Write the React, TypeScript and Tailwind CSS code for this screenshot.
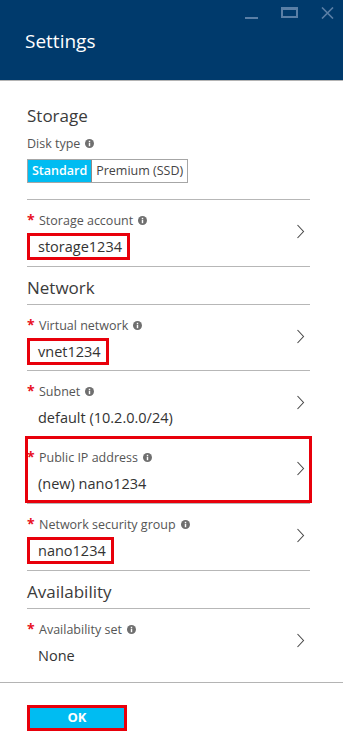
import React from 'react';

type Field = {
  label: string;
  value: string;
  boxValue?: boolean;
  boxRow?: boolean;
};

const InfoIcon: React.FC = () => (
  <svg width="9" height="9" viewBox="0 0 10 10" className="inline-block ml-[5px] mb-[1px]">
    <circle cx="5" cy="5" r="5" fill="#6f6f6f" />
    <rect x="4.2" y="4.2" width="1.6" height="3.8" fill="#fff" />
    <rect x="4.2" y="2" width="1.6" height="1.5" fill="#fff" />
  </svg>
);

const Chevron: React.FC = () => (
  <svg width="9" height="15" viewBox="0 0 9 15" className="shrink-0">
    <path d="M1.5 1 L7.5 7.5 L1.5 14" fill="none" stroke="#4a4a4a" strokeWidth="1.1" />
  </svg>
);

const SectionTitle: React.FC<{ children: React.ReactNode }> = ({ children }) => (
  <div className="h-[38px] flex items-end pb-[4px] text-[17px] leading-[24px] text-[#3b3b3b] border-b border-[#b7b7b7]">
    {children}
  </div>
);

const FieldRow: React.FC<{ field: Field; height: string; last?: boolean }> = ({ field, height, last }) => (
  <div className={`relative ${height} flex justify-between ${last ? '' : 'border-b border-[#b7b7b7]'}`}>
    <div className="flex flex-col pt-[1px]">
      <div className="mt-[11px] h-[18px] flex items-center text-[12.5px] text-[#555]">
        <span className="text-[#e81123] text-[14px] font-bold w-[12px] leading-none -mt-[3px]">*</span>
        <span>{field.label}</span>
        <InfoIcon />
      </div>
      <div
        className={`mt-[3px] h-[27px] flex items-center pl-[8px] pr-[5px] text-[14.5px] text-[#333] border-[3px] w-fit ${
          field.boxValue ? 'border-[#e8000b]' : 'border-transparent'
        }`}
      >
        {field.value}
      </div>
    </div>
    <div className="mr-[5px] mt-[24px]">
      <Chevron />
    </div>
    {field.boxRow && (
      <div className="absolute left-[-2px] right-[-2px] top-[-1px] bottom-[0px] border-[3px] border-[#e8000b]" />
    )}
  </div>
);

const App: React.FC = () => {
  return (
    <div className="w-[343px] h-[741px] bg-white flex flex-col font-['Open_Sans',sans-serif] overflow-hidden">
      {/* header */}
      <div className="h-[81px] shrink-0 bg-[#003a6c] border-b border-[#b4b4b4] flex flex-col">
        <div className="h-[28px] flex items-start justify-end gap-[23px] pr-[9px] pt-[7px]">
          <div className="w-[13px] h-[12px] flex items-end">
            <div className="w-[13px] h-[2px] bg-[#5a7fa6]" />
          </div>
          <div className="w-[17px] h-[11px] border-[2px] border-t-[3px] border-[#5a7fa6]" />
          <svg width="13" height="12" viewBox="0 0 13 12">
            <path d="M1 0.5 L12 11.5 M12 0.5 L1 11.5" stroke="#5a7fa6" strokeWidth="1.6" />
          </svg>
        </div>
        <div className="pl-[25px] text-[19px] leading-[26px] text-white">Settings</div>
      </div>

      {/* content */}
      <div className="flex-1 flex flex-col pl-[27px] pr-[33px]">
        <div className="mt-[23px] text-[17px] leading-[24px] text-[#3b3b3b]">Storage</div>
        <div className="mt-[7px] h-[18px] flex items-center text-[12.5px] text-[#555]">
          Disk type
          <InfoIcon />
        </div>
        <div className="mt-[6px] flex w-fit border border-[#a6a6a6] h-[24px]">
          <div className="px-[4px] bg-[#00bcf2] text-white text-[12.5px] font-semibold flex items-center border-r border-[#8a8a8a]">
            Standard
          </div>
          <div className="px-[4px] text-[#444] text-[12.5px] flex items-center">Premium (SSD)</div>
        </div>
        <div className="mt-[16px] border-b border-[#b7b7b7]" />
        <FieldRow height="h-[67px]" field={{ label: 'Storage account', value: 'storage1234', boxValue: true }} />

        <SectionTitle>Network</SectionTitle>
        <FieldRow height="h-[66px]" field={{ label: 'Virtual network', value: 'vnet1234', boxValue: true }} />
        <FieldRow height="h-[66px]" field={{ label: 'Subnet', value: 'default (10.2.0.0/24)' }} />
        <FieldRow height="h-[67px]" field={{ label: 'Public IP address', value: '(new) nano1234', boxRow: true }} />
        <FieldRow height="h-[67px]" field={{ label: 'Network security group', value: 'nano1234', boxValue: true }} />

        <SectionTitle>Availability</SectionTitle>
        <FieldRow height="h-[73px]" field={{ label: 'Availability set', value: 'None' }} last />
      </div>

      {/* footer */}
      <div className="h-[59px] shrink-0 border-t border-[#b4b4b4] pl-[27px] pt-[22px]">
        <button className="w-[100px] h-[26px] bg-[#00bcf2] border-[3px] border-[#e8000b] text-white text-[13px] font-bold flex items-center justify-center">
          OK
        </button>
      </div>
    </div>
  );
};

export default App;
